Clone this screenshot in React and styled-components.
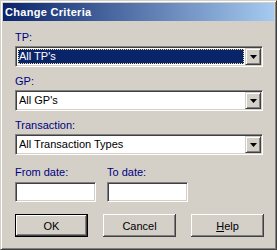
import React from 'react';
import styled, { createGlobalStyle } from 'styled-components';

const GlobalStyle = createGlobalStyle`
  body {
    margin: 0;
    background: #d4d0c8;
    font-family: "Liberation Sans", Arial, sans-serif;
    font-size: 11px;
  }
`

const Window = styled.div`
  box-sizing: border-box;
  width: 277px;
  height: 250px;
  border: 1px solid;
  border-color: #d4d0c8 #404040 #404040 #d4d0c8;
  box-shadow: inset 1px 1px #fff, inset -1px -1px #808080;
  padding: 2px;
  background: #d4d0c8;
  display: flex;
  flex-direction: column;
`

const TitleBar = styled.div`
  height: 18px;
  line-height: 18px;
  padding-left: 2px;
  background: linear-gradient(to right, #0a246a, #a6caf0);
  color: #fff;
  font-weight: bold;
  font-size: 11px;
  letter-spacing: 0.3px;
  white-space: nowrap;
`

const Body = styled.div`
  padding: 10px 0 0 12px;
  display: flex;
  flex-direction: column;
`

const Field = styled.div`
  display: flex;
  flex-direction: column;
  margin-bottom: 8px;
`

const Label = styled.div`
  color: #000080;
  font-size: 11px;
  line-height: 13px;
  margin-bottom: ${({ gap }) => gap || 2}px;
  white-space: nowrap;
`

const Combo = styled.div`
  box-sizing: border-box;
  width: 248px;
  height: 21px;
  border: 1px solid;
  border-color: #808080 #fff #fff #808080;
  box-shadow: inset 1px 1px #404040, inset -1px -1px #d4d0c8;
  padding: 1px;
  background: #fff;
  display: flex;
`

const ComboValue = styled.div`
  flex: 1;
  margin: 1px;
  border: 1px dotted ${({ selected }) => selected ? '#f5db95' : 'transparent'};
  background: ${({ selected }) => selected ? '#0a246a' : 'transparent'};
  color: ${({ selected }) => selected ? '#fff' : '#000'};
  line-height: 13px;
  white-space: nowrap;
  overflow: hidden;
`

const DropButton = styled.div`
  box-sizing: border-box;
  width: 16px;
  height: 17px;
  border: 1px solid;
  border-color: #d4d0c8 #404040 #404040 #d4d0c8;
  box-shadow: inset 1px 1px #fff, inset -1px -1px #808080;
  background: #d4d0c8;
  display: flex;
  align-items: center;
  justify-content: center;
`

const DateRow = styled.div`
  display: flex;
  gap: 11px;
  margin-top: 3px;
`

const DateField = styled.div`
  display: flex;
  flex-direction: column;
`

const DateInput = styled.div`
  box-sizing: border-box;
  width: 81px;
  height: 20px;
  border: 1px solid;
  border-color: #808080 #fff #fff #808080;
  box-shadow: inset 1px 1px #404040, inset -1px -1px #d4d0c8;
  background: #fff;
`

const ButtonRow = styled.div`
  display: flex;
  gap: 15px;
  margin-top: 12px;
`

const Button = styled.div`
  box-sizing: border-box;
  width: 73px;
  height: 23px;
  border: ${({ isDefault }) => isDefault ? '1px solid #000' : 'none'};
  background: #d4d0c8;
  box-shadow: inset -1px -1px #404040, inset 1px 1px #fff, inset -2px -2px #808080;
  display: flex;
  align-items: center;
  justify-content: center;
  color: #000;
  font-size: 11px;
`

const Arrow = () => (
  <svg width="7" height="4" viewBox="0 0 7 4">
    <polygon points="0,0 7,0 3.5,4" fill="#000" />
  </svg>
)

const Select = ({ value, selected }) => (
  <Combo>
    <ComboValue selected={selected}>{value}</ComboValue>
    <DropButton><Arrow /></DropButton>
  </Combo>
)

const fields = [
  { label: 'TP:', value: "All TP's", selected: true },
  { label: 'GP:', value: "All GP's" },
  { label: 'Transaction:', value: 'All Transaction Types' },
];

export default function App() {
  return (
    <>
      <GlobalStyle />
      <Window>
        <TitleBar>Change Criteria</TitleBar>
        <Body>
          {fields.map(f => (
            <Field key={f.label}>
              <Label>{f.label}</Label>
              <Select value={f.value} selected={f.selected} />
            </Field>
          ))}
          <DateRow>
            <DateField>
              <Label gap={3}>From date:</Label>
              <DateInput />
            </DateField>
            <DateField>
              <Label gap={3}>To date:</Label>
              <DateInput />
            </DateField>
          </DateRow>
          <ButtonRow>
            <Button isDefault>OK</Button>
            <Button>Cancel</Button>
            <Button><span><u>H</u>elp</span></Button>
          </ButtonRow>
        </Body>
      </Window>
    </>
  );
}
